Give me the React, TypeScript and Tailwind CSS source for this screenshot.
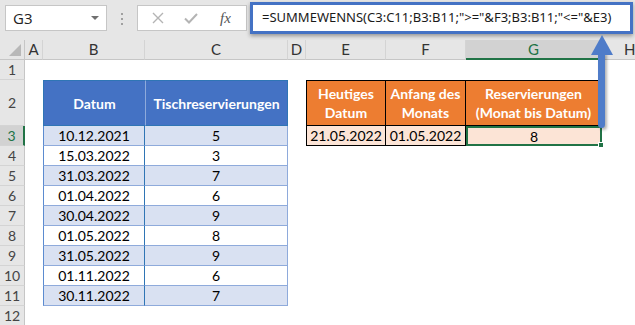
import React from "react";

const cellFont = { fontFamily: "Lato, 'Open Sans', sans-serif" };

const rows = [
  ["10.12.2021", "5"],
  ["15.03.2022", "3"],
  ["31.03.2022", "7"],
  ["01.04.2022", "6"],
  ["30.04.2022", "9"],
  ["01.05.2022", "8"],
  ["31.05.2022", "9"],
  ["01.11.2022", "6"],
  ["30.11.2022", "7"],
];

function RowHead({ n, active }: { n?: number; active?: boolean }) {
  return (
    <div
      className={
        "flex items-center justify-center border-b border-[#d4d4d4] text-[14px] " +
        (active
          ? "bg-[#d2d2d2] text-[#217346] border-r-2 border-r-[#217346]"
          : "bg-[#e6e6e6] text-[#444] border-r border-r-[#c6c6c6]")
      }
    >
      {n}
    </div>
  );
}

function ColHead({ label, active }: { label: string; active?: boolean }) {
  return (
    <div
      className={
        "flex items-center justify-center border-r border-[#d4d4d4] text-[15px] " +
        (active
          ? "bg-[#d2d2d2] text-[#217346] border-b-2 border-b-[#217346]"
          : "bg-[#e6e6e6] text-[#333] border-b border-b-[#c6c6c6]")
      }
    >
      {label}
    </div>
  );
}

export default function App() {
  return (
    <div className="relative h-[325px] w-[635px] overflow-hidden bg-white" style={cellFont}>
      {/* formula bar */}
      <div className="flex h-[40px] items-start bg-[#e6e6e6] pt-[5px] pl-[5px]">
        <div className="flex h-[26px] w-[102px] items-center justify-between border border-[#c6c6c6] bg-white px-[7px] text-[15px] text-[#222]" style={{ fontFamily: "'Open Sans', sans-serif" }}>
          <span>G3</span>
          <span className="h-0 w-0 border-x-[4px] border-t-[4px] border-x-transparent border-t-[#707070]" />
        </div>
        <div className="flex w-[30px] flex-col items-center gap-[3px] pt-[8px]">
          <span className="h-[2px] w-[2px] bg-[#a0a0a0]" />
          <span className="h-[2px] w-[2px] bg-[#a0a0a0]" />
          <span className="h-[2px] w-[2px] bg-[#a0a0a0]" />
        </div>
        <div className="flex h-[26px] w-[110px] items-center border border-[#c6c6c6] bg-white">
          <svg width="14" height="14" viewBox="0 0 14 14" className="ml-[13px]">
            <path d="M2 2L12 12M12 2L2 12" stroke="#b4b4b4" strokeWidth="1.4" />
          </svg>
          <svg width="16" height="14" viewBox="0 0 16 14" className="ml-[18px]">
            <path d="M2 7.5L6 11.5L14 3" stroke="#b4b4b4" strokeWidth="2" fill="none" />
          </svg>
          <span className="ml-[21px] text-[15px] italic text-[#555]" style={{ fontFamily: "'Liberation Serif', serif" }}>
            fx
          </span>
        </div>
        <div className="-mt-[3px] ml-[3px] flex h-[32px] w-[383px] items-center overflow-hidden whitespace-nowrap border-[3px] border-[#4472c4] bg-white pl-[9px] text-[13px] text-[#1a1a1a] shadow-[0_2px_4px_rgba(0,0,0,0.35)]" style={{ fontFamily: "'Noto Sans', sans-serif" }}>
          =SUMMEWENNS(C3:C11;B3:B11;"&gt;="&amp;F3;B3:B11;"&lt;="&amp;E3)
        </div>
      </div>

      {/* sheet */}
      <div className="grid grid-cols-[25px_18px_102px_143px_18px_80px_80px_136px_1fr] grid-rows-[20px_20px_46px_repeat(10,20px)] text-[14px]">
        {/* column header row */}
        <div className="relative border-r border-b border-[#c6c6c6] bg-[#e6e6e6]">
          <span className="absolute right-[3px] bottom-[3px] h-0 w-0" style={{ borderRight: "12px solid #b8b8b8", borderTop: "12px solid transparent" }} />
        </div>
        <ColHead label="A" />
        <ColHead label="B" />
        <ColHead label="C" />
        <ColHead label="D" />
        <ColHead label="E" />
        <ColHead label="F" />
        <ColHead label="G" active />
        <div className="flex items-center border-b border-[#c6c6c6] bg-[#e6e6e6] pl-[22px] text-[15px] text-[#333]">H</div>

        {/* row 1 */}
        <RowHead n={1} />
        <div className="col-span-8" />

        {/* row 2 */}
        <RowHead n={2} />
        <div />
        <div className="flex items-center justify-center border border-r-0 border-[#2f75b5] bg-[#4472c4] font-bold text-white">Datum</div>
        <div className="flex items-center justify-center border border-l-[#8eaadb] border-[#2f75b5] bg-[#4472c4] font-bold text-white">Tischreservierungen</div>
        <div />
        <div className="flex items-center justify-center border border-black bg-[#ed7d31] text-center font-bold leading-[19px] text-white">
          Heutiges<br />Datum
        </div>
        <div className="flex items-center justify-center border-y border-r border-black bg-[#ed7d31] text-center font-bold leading-[19px] text-white">
          Anfang des<br />Monats
        </div>
        <div className="flex items-center justify-center border-y border-r border-black bg-[#ed7d31] text-center font-bold leading-[19px] text-white">
          Reservierungen<br />(Monat bis Datum)
        </div>
        <div />

        {/* rows 3 - 11 */}
        {rows.map((r, i) => {
          const n = i + 3;
          const bg = i % 2 === 0 ? "bg-[#d9e1f2]" : "bg-white";
          return (
            <React.Fragment key={n}>
              <RowHead n={n} active={n === 3} />
              <div />
              <div className={"flex items-center justify-center border-l border-r border-b border-l-[#5b8bd0] border-r-[#2f75b5] border-b-[#8eaadb] text-black " + bg}>{r[0]}</div>
              <div className={"flex items-center justify-center border-r border-b border-[#8eaadb] text-black " + bg}>{r[1]}</div>
              {n === 3 ? (
                <>
                  <div />
                  <div className="flex items-center justify-center border-x border-b border-black bg-[#fce4d6] text-black">21.05.2022</div>
                  <div className="flex items-center justify-center border-r border-b border-black bg-[#fce4d6] text-black">01.05.2022</div>
                  <div className="relative flex items-center justify-center border-2 border-[#217346] bg-[#fce4d6] text-black">
                    8
                    <span className="absolute -right-[4px] -bottom-[4px] h-[6px] w-[6px] border border-white bg-[#217346]" />
                  </div>
                  <div />
                </>
              ) : (
                <div className="col-span-5" />
              )}
            </React.Fragment>
          );
        })}

        {/* row 12 */}
        <RowHead n={12} />
        <div className="col-span-8" />
      </div>

      {/* arrow */}
      <div className="absolute left-[598px] top-[52px] h-[76px] w-[7px] rounded-b-[4px] bg-[#4f7cc9] shadow-[2px_2px_3px_rgba(0,0,0,0.3)]" />
      <svg className="absolute left-[591px] top-[35px]" width="22" height="20" viewBox="0 0 22 20">
        <path d="M11 0L22 20H0Z" fill="#4f7cc9" />
      </svg>
    </div>
  );
}
